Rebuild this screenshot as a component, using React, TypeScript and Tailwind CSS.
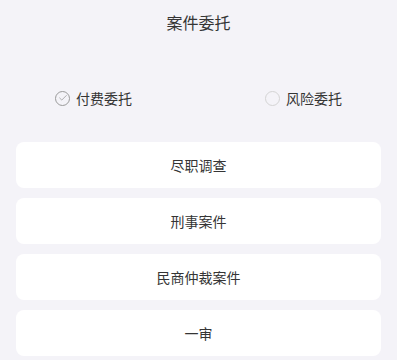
import { Check } from "lucide-react";

export default function App() {
  const items = ["尽职调查", "刑事案件", "民商仲裁案件", "一审"];

  return (
    <div
      className="min-h-[360px] bg-[#f4f3f8] text-[#353535]"
      style={{ fontFamily: '"Noto Sans CJK SC", "Noto Sans", sans-serif' }}
    >
      <div className="h-[44px] flex items-center justify-center text-[16px]">案件委托</div>

      <div className="mt-[42px] h-[24px] px-[55px] flex items-center justify-between text-[14px]">
        <div className="flex items-center gap-[6px]">
          <span className="w-[15px] h-[15px] rounded-full border border-[#9a9a9a] flex items-center justify-center">
            <Check size={10} strokeWidth={1.6} className="text-[#8a8a8a]" />
          </span>
          <span>付费委托</span>
        </div>
        <div className="flex items-center gap-[6px]">
          <span className="w-[15px] h-[15px] rounded-full border border-[#d4d4d4]" />
          <span>风险委托</span>
        </div>
      </div>

      <div className="mt-[32px] mx-4 flex flex-col gap-[10px]">
        {items.map(t => (
          <div key={t} className="h-[46px] rounded-lg bg-white flex items-center justify-center text-[14px]">
            {t}
          </div>
        ))}
      </div>
    </div>
  );
}
